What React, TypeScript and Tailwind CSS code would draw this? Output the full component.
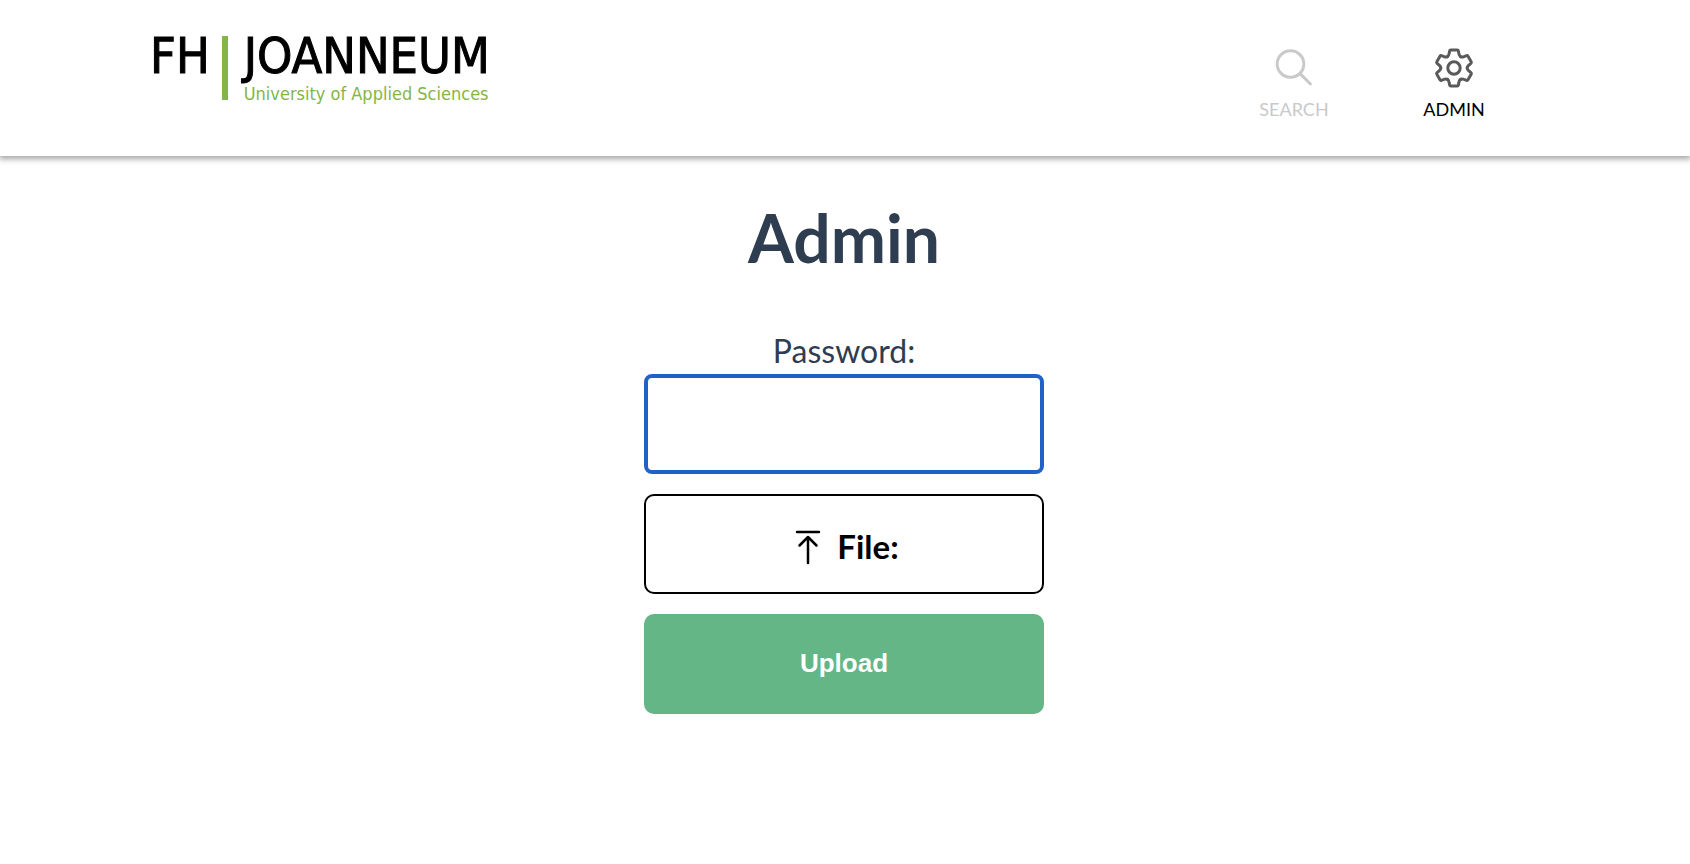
import { useState } from "react";

const toothAngles = [0, 60, 120, 180, 240, 300];

function SearchIcon() {
  return (
    <svg viewBox="0 0 40 40" className="size-10" fill="none" stroke="currentColor" strokeWidth="3" strokeLinecap="round" aria-hidden="true">
      <circle cx="16.5" cy="16" r="13.3" />
      <path d="M26.1 25.6 L36.4 36" />
    </svg>
  );
}

function GearIcon() {
  return (
    <svg viewBox="-20 -20 40 40" className="size-10" fill="none" stroke="currentColor" strokeWidth="3" strokeLinecap="round" strokeLinejoin="round" aria-hidden="true">
      {toothAngles.map((angle) => (
        <path
          key={angle}
          transform={`rotate(${angle})`}
          d="M-6.6 -11.4 Q-5.2 -12.2 -4.9 -14.4 L-4.4 -17 Q-4.2 -18 -3.2 -18 H3.2 Q4.2 -18 4.4 -17 L4.9 -14.4 Q5.2 -12.2 6.6 -11.4"
        />
      ))}
      <circle r="6.2" />
    </svg>
  );
}

function UploadIcon() {
  return (
    <svg viewBox="0 0 26 36" className="h-9 w-[26px]" fill="none" stroke="currentColor" strokeWidth="2.5" strokeLinecap="round" strokeLinejoin="round" aria-hidden="true">
      <path d="M2 3 H24 M13 34 V8 M4.5 16.5 L13 8 L21.5 16.5" />
    </svg>
  );
}

function Logo() {
  return (
    <a href="#home" className="flex gap-3 pt-9 font-['DejaVu_Sans_Condensed','DejaVu_Sans',sans-serif] text-black">
      <span className="text-[50px] leading-10 [-webkit-text-stroke:1px_currentColor]">FH</span>
      <span className="h-16 w-[6px] bg-[#84b547]" />
      <span className="flex flex-col gap-[6px] pl-1">
        <span className="text-[50px] leading-10 [-webkit-text-stroke:1px_currentColor]">JOANNEUM</span>
        <span className="text-[18px] leading-6 text-[#84b547]">University of Applied Sciences</span>
      </span>
    </a>
  );
}

export default function App() {
  const [password, setPassword] = useState("");
  return (
    <div className="min-h-screen bg-white font-['Lato',sans-serif] text-[#2f3d50]">
      <header className="flex h-39 items-start justify-between pr-39 pl-[150px] shadow-[0_2px_6px_1px_rgba(0,0,0,0.36)]">
        <Logo />
        <nav className="flex pt-12">
          <a href="#search" className="flex w-40 flex-col items-center gap-[7px] text-lg text-[#c9c9c9]">
            <SearchIcon />
            SEARCH
          </a>
          <a href="#admin" className="flex w-40 flex-col items-center gap-[7px] text-lg text-black">
            <span className="text-[#5a5a5a]"><GearIcon /></span>
            ADMIN
          </a>
        </nav>
      </header>
      <main className="flex flex-col items-center pt-11 pr-[2px]">
        <h1 className="text-[66px] leading-[76px] font-bold">Admin</h1>
        <form className="mt-14 flex w-[400px] flex-col gap-5" onSubmit={(e) => e.preventDefault()}>
          <div className="flex flex-col items-center gap-1">
            <label htmlFor="password" className="text-[32px] leading-[38px]">Password:</label>
            <input
              id="password"
              type="password"
              value={password}
              onChange={(e) => setPassword(e.target.value)}
              className="h-25 w-full rounded-lg border-4 border-[#2062c8] px-5 text-[32px] outline-none"
            />
          </div>
          <label className="flex h-25 cursor-pointer items-center justify-center gap-4 rounded-[10px] border-2 border-black pt-[6px] pl-[6px] text-[33px] font-bold text-black">
            <UploadIcon />
            File:
            <input type="file" className="sr-only" />
          </label>
          <button type="submit" className="h-25 rounded-[10px] bg-[#65b687] pb-[2px] font-['Liberation_Sans',sans-serif] text-[26px] font-bold text-white">
            Upload
          </button>
        </form>
      </main>
    </div>
  );
}
